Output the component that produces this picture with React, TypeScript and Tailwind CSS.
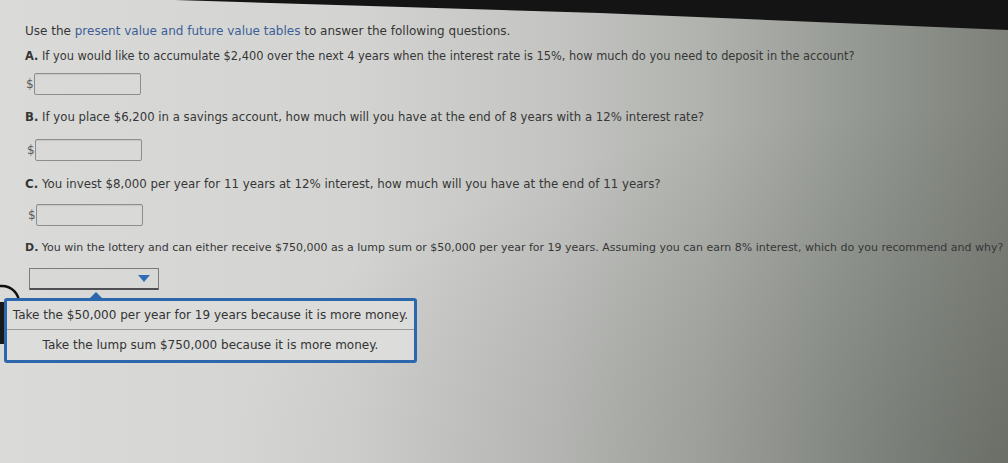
import React from "react";

const font = { fontFamily: '"DejaVu Sans", Verdana, sans-serif' };

function DollarBox({ offset }: { offset: string }) {
  return (
    <div className={`flex items-center h-[22px] ${offset}`}>
      <span className="text-[12px] text-[#5a5a5a] w-[8px] leading-none">$</span>
      <div className="w-[107px] h-[22px] border border-[#8d8e8c] rounded-[2px] bg-[#d9dad8] shadow-[inset_0_1px_1px_rgba(0,0,0,0.08)]" />
    </div>
  );
}

export default function App() {
  return (
    <div
      className="relative w-[1008px] h-[463px] overflow-hidden bg-[linear-gradient(to_right,#dadbd9_0%,#d3d4d2_35%,#c4c5c2_55%,#b0b2ae_70%,#979b95_84%,#7c8079_100%)] text-[#363636]"
      style={font}
    >
      {/* vignette darkening toward bottom right */}
      <div className="pointer-events-none absolute inset-0 bg-[radial-gradient(ellipse_at_100%_100%,rgba(60,64,58,0.28),rgba(60,64,58,0)_55%)]" />
      {/* dark monitor bezel wedge at the top */}
      <svg className="absolute left-0 top-0" width="1008" height="40" viewBox="0 0 1008 40">
        <polygon points="175,0 1008,0 1008,30 600,13" fill="#141414" />
      </svg>

      {/* black cursor ring peeking at the left edge */}
      <svg className="absolute left-0 top-[282px]" width="30" height="70" viewBox="0 0 30 70">
        <circle cx="2" cy="21" r="17" fill="none" stroke="#111" strokeWidth="2.5" />
        <rect x="0" y="20" width="4" height="42" fill="#1a1a1a" />
      </svg>

      <div className="relative flex flex-col pl-[25px] pt-[23px]">
        <p className="text-[12px] leading-4">
          Use the <span className="text-[#3c5e96]">present value and future value tables</span> to answer the following questions.
        </p>
        <p className="mt-[9px] text-[11.4px] leading-4 whitespace-nowrap">
          <b className="font-bold">A.</b> If you would like to accumulate $2,400 over the next 4 years when the interest rate is 15%, how much do you need to deposit in the account?
        </p>
        <DollarBox offset="mt-[9px] ml-[1px]" />

        <p className="mt-[14px] text-[11.7px] leading-4 whitespace-nowrap">
          <b className="font-bold">B.</b> If you place $6,200 in a savings account, how much will you have at the end of 8 years with a 12% interest rate?
        </p>
        <DollarBox offset="mt-[14px] ml-[2px]" />

        <p className="mt-[15px] text-[11.8px] leading-4 whitespace-nowrap">
          <b className="font-bold">C.</b> You invest $8,000 per year for 11 years at 12% interest, how much will you have at the end of 11 years?
        </p>
        <DollarBox offset="mt-[12px] ml-[3px]" />

        <p className="mt-[14px] text-[11px] leading-4 whitespace-nowrap">
          <b className="font-bold">D.</b> You win the lottery and can either receive $750,000 as a lump sum or $50,000 per year for 19 years. Assuming you can earn 8% interest, which do you recommend and why?
        </p>

        <div className="mt-[12px] ml-[4px] flex items-center justify-end w-[130px] h-[22px] border border-[#7c7d7b] border-b-[#4d4f52] border-b-2 rounded-[1px] bg-[#d8d9d7] pr-[8px]">
          <svg width="12" height="8" viewBox="0 0 12 8">
            <polygon points="0,0 12,0 6,7" fill="#2f6db5" />
          </svg>
        </div>

        <div className="relative mt-[8px] -ml-[21px] w-[413px] border-[3px] border-[#2c66ad] rounded-[3px] bg-[#dcdddb] text-[12px] text-[#333]">
          <svg className="absolute -top-[9px] left-[82px]" width="14" height="7" viewBox="0 0 14 7">
            <polygon points="0,7 7,0 14,7" fill="#2c66ad" />
          </svg>
          <div className="h-[29px] flex items-center justify-center border-b border-[#9a9b99] whitespace-nowrap">
            Take the $50,000 per year for 19 years because it is more money.
          </div>
          <div className="h-[30px] flex items-center justify-center whitespace-nowrap">
            Take the lump sum $750,000 because it is more money.
          </div>
        </div>
      </div>
    </div>
  );
}
